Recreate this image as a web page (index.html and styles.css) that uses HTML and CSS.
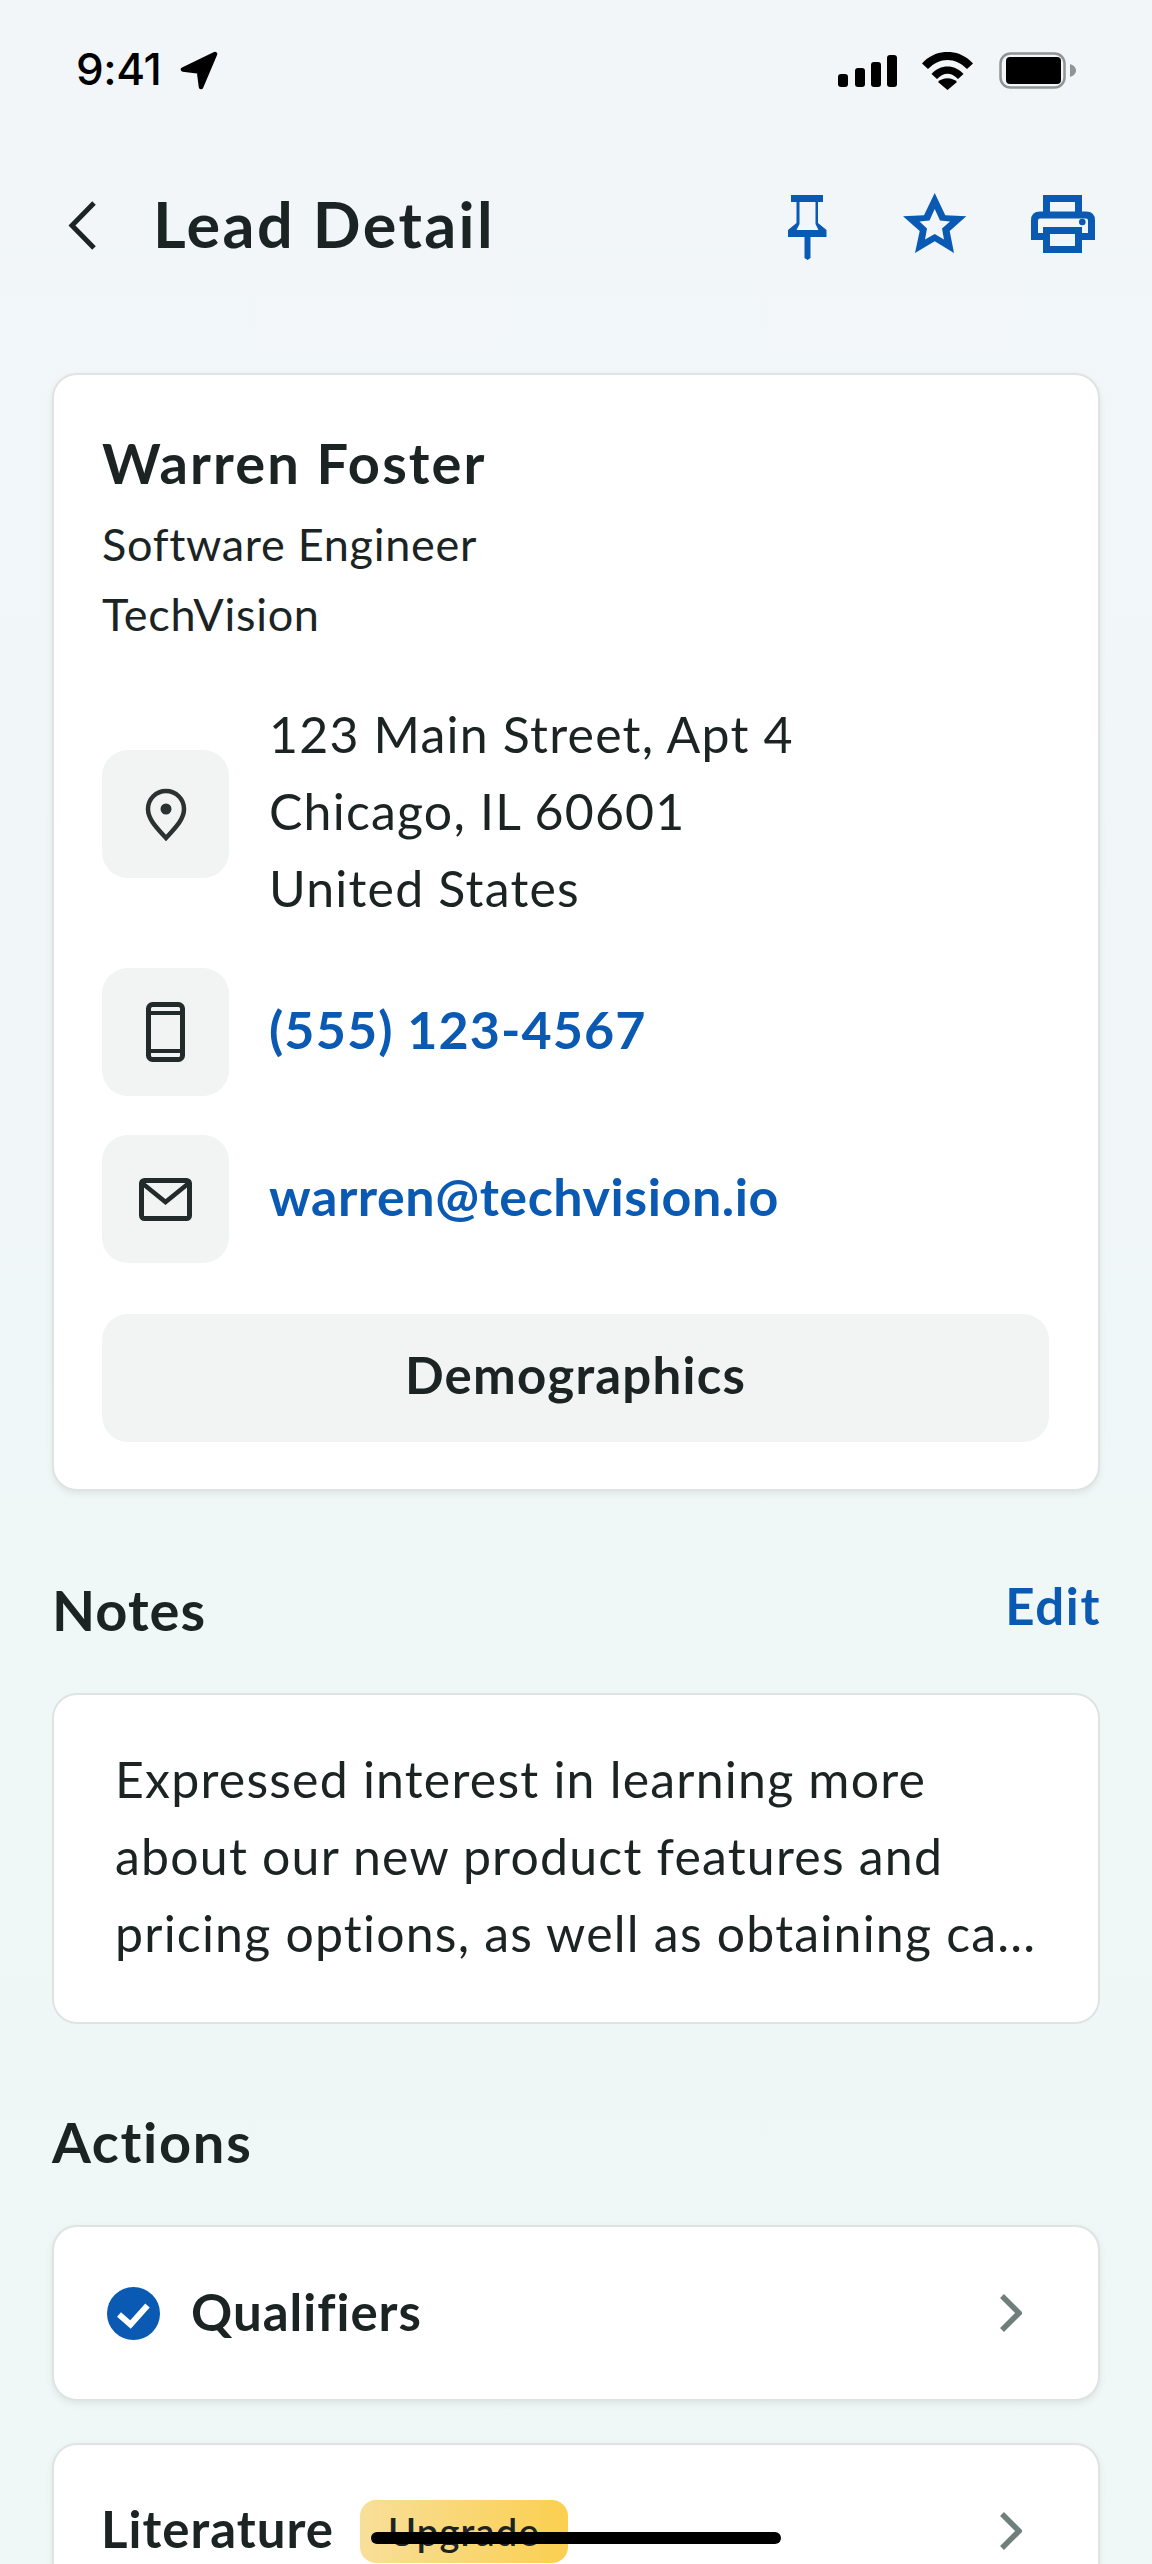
FILE: index.html
```html
<!DOCTYPE html>
<html lang="en">
<head>
<meta charset="utf-8">
<title>Lead Detail</title>
<link rel="stylesheet" href="styles.css">
</head>
<body>
<div class="screen">
  <div class="status">
    <div class="status-left">
      <span class="time">9:41</span>
      <svg class="arrow" viewBox="0 0 38 39"><path d="M35 3 3 18.500 19 20.500 21 36z" stroke="#000" stroke-width="4.500" stroke-linejoin="round"/></svg>
    </div>
    <div class="status-right">
      <svg class="signal" viewBox="0 0 59 32"><rect x="0" y="19" width="10" height="13" rx="3"/><rect x="17" y="13" width="10" height="19" rx="3"/><rect x="33" y="7" width="10" height="25" rx="3"/><rect x="49" y="0" width="10" height="32" rx="3"/></svg>
      <svg class="wifi" viewBox="0 0 51 38"><path d="M0 11.500C14-4 37-4 51 11.500L45 17C33 5 18 5 6 17z"/><path d="M9.500 22C18 12 33 12 41.500 22L36 27C29 20 22 20 15 27z"/><path d="M16 30C21 25 30 25 35 30L25.500 38z"/></svg>
      <svg class="battery" viewBox="0 0 77 37"><rect x="1.500" y="1.500" width="64" height="34" rx="10" fill="none" stroke="#8f9495" stroke-width="2.500"/><rect x="7" y="5" width="55" height="27" rx="4"/><path d="M71 12c3 1 6 3 6 6.500s-3 5.500-6 6.500z" fill="#8f9495"/></svg>
    </div>
  </div>

  <header class="header">
    <svg class="back" viewBox="0 0 29 51"><path d="M26 3 4 25.500 26 48" fill="none" stroke="#1b2423" stroke-width="5"/></svg>
    <h1 class="title">Lead Detail</h1>
    <div class="tools">
      <svg class="ico-pin" viewBox="0 0 39 65"><path fill-rule="evenodd" d="M3 0h32v7h-5v21l8.500 7v7H22.500v21l-3 2-3-2V42H0v-7l8.500-7V7H3zM11.500 7v22l-3 6h22l-3-6V7z"/></svg>
      <svg class="ico-star" viewBox="0 0 64 60"><path fill-rule="evenodd" d="M31.700 0 42.300 22.300 63.300 23.300 46.700 38 51 60 31.700 48.300 12 60 16.700 38 0 23.300 21 22.300zM31.700 16 26.500 27.500 16.500 28.500 24 35.500 22 46.500 31.700 41 41 46.500 39 35.500 47 28.500 37 27.500z"/></svg>
      <svg class="ico-print" viewBox="0 0 64 58"><path fill-rule="evenodd" d="M12 0h39v16.500h4q9 0 9 9V45H51v13H12V45H0V25.500q0-9 9-9h3zM19 7v9.500h25V7zM9 23.500q-2 0-2 2V38h5v-6h39v6h6V25.500q0-2-2-2zM19 39v12h25V39z"/><circle cx="51.300" cy="27" r="3.300"/></svg>
    </div>
  </header>

  <main class="main">
    <section class="card raised contact">
      <h2 class="name">Warren Foster</h2>
      <p class="sub">Software Engineer</p>
      <p class="sub">TechVision</p>

      <div class="row row-address">
        <div class="icon-box icon-box-address">
          <svg class="ico-loc" viewBox="0 0 42 53"><path d="M21 50C11 39 3 31 3 21a18 18 0 0 1 36 0c0 10-8 18-18 29z" fill="none" stroke="#2b3231" stroke-width="4.500"/><circle cx="21" cy="21" r="5.500" fill="#2b3231"/></svg>
        </div>
        <div class="address">123 Main Street, Apt 4<br>Chicago, IL 60601<br>United States</div>
      </div>

      <div class="row row-phone">
        <div class="icon-box">
          <svg class="ico-phone" viewBox="0 0 39 60"><rect x="2.500" y="2.500" width="34" height="55" rx="4" fill="none" stroke="#232b2a" stroke-width="5"/><path d="M2 11h35M2 49h35" stroke="#232b2a" stroke-width="4"/></svg>
        </div>
        <a class="link phone">(555) 123-4567</a>
      </div>

      <div class="row row-email">
        <div class="icon-box">
          <svg class="ico-mail" viewBox="0 0 53 43"><rect x="2.500" y="2.500" width="48" height="38" rx="3" fill="none" stroke="#232b2a" stroke-width="5"/><path d="M3 5l23.500 19L50 5" fill="none" stroke="#232b2a" stroke-width="4.500"/></svg>
        </div>
        <a class="link email">warren@techvision.io</a>
      </div>

      <button class="demo">Demographics</button>
    </section>

    <div class="section-head notes-head">
      <h2 class="section-title notes-title">Notes</h2>
      <a class="edit">Edit</a>
    </div>
    <section class="card notes">
      Expressed interest in learning more<br>about our new product features and<br>pricing options, as well as obtaining ca...
    </section>

    <h2 class="section-title actions-title">Actions</h2>
    <section class="card raised action qualifiers">
      <svg class="check" viewBox="0 0 53 53"><circle cx="26.500" cy="26.500" r="26.500" fill="#0a59b3"/><path d="M12 27.500l11.500 10L40.500 18.500" fill="none" stroke="#fff" stroke-width="6"/></svg>
      <span class="action-label">Qualifiers</span>
      <svg class="chev" viewBox="0 0 23 38"><path d="M3 2l17 17L3 36" fill="none" stroke="#6f7f7c" stroke-width="5.500"/></svg>
    </section>
    <section class="card raised action literature">
      <span class="action-label">Literature</span>
      <span class="badge">Upgrade</span>
      <svg class="chev" viewBox="0 0 23 38"><path d="M3 2l17 17L3 36" fill="none" stroke="#6f7f7c" stroke-width="5.500"/></svg>
    </section>
  </main>

  <div class="home-bar"></div>
</div>
</body>
</html>
```

FILE: styles.css
```css
* { box-sizing: border-box; margin: 0; padding: 0; }
html, body { width: 1152px; height: 2564px; overflow: hidden; }
body { font-family: "Lato", "Noto Sans", sans-serif; color: #1b2423; }
.screen { position: relative; width: 1152px; height: 2564px; overflow: hidden; background: linear-gradient(180deg, #f2f6f9 0%, #f0f7f7 60%, #eff8f6 100%); }

.status { display: flex; justify-content: space-between; align-items: center; height: 138px; padding: 0 76px 0 76px; }
.status-left, .status-right { display: flex; align-items: center; }
.status-right { margin-top: 3px; }
.time { font-family: "Inter", sans-serif; font-weight: 500; font-size: 44px; letter-spacing: -0.4px; color: #000; }
.arrow { width: 38px; height: 39px; margin-left: 19px; margin-top: 3px; fill: #000; }
.signal { width: 59px; height: 32px; fill: #000; }
.wifi { width: 51px; height: 38px; margin-left: 25px; fill: #000; }
.battery { width: 77px; height: 37px; margin-left: 26px; fill: #000; }

.header { display: flex; align-items: center; height: 174px; padding: 0 57px 0 68px; }
.back { width: 29px; height: 51px; }
.title { font-size: 63px; font-weight: 700; letter-spacing: 2.4px; line-height: 76px; margin-left: 56px; margin-bottom: 2px; flex: 1; }
.tools { display: flex; align-items: flex-start; height: 68px; fill: #0a59b3; }
.ico-pin { width: 39px; height: 65px; margin-top: 4px; }
.ico-star { width: 64px; height: 60px; margin-top: 2px; margin-left: 76px; }
.ico-print { width: 64px; height: 58px; margin-top: 4px; margin-left: 64px; }

.main { padding: 61px 52px 0; }
.card { background: #fff; border: 2px solid #dfe4e3; border-radius: 25px; }
.raised { box-shadow: 0 3px 6px rgba(60, 80, 80, 0.1); }

.contact { height: 1118px; padding: 55px 48px 0; }
.name { font-size: 56px; font-weight: 700; letter-spacing: 2.1px; line-height: 66px; }
.sub { font-size: 45px; letter-spacing: 0.7px; line-height: 70px; }
.sub:first-of-type { margin-top: 13px; }
.row { display: flex; align-items: center; }
.row-address { margin-top: 47px; }
.row-phone { margin-top: 41px; }
.row-email { margin-top: 39px; }
.icon-box { display: flex; align-items: center; justify-content: center; width: 127px; height: 128px; background: #f1f4f3; border-radius: 26px; margin-right: 40px; flex: none; }
.icon-box-address { margin-top: 5px; }
.ico-loc { width: 42px; height: 53px; }
.ico-phone { width: 39px; height: 60px; }
.ico-mail { width: 53px; height: 43px; }
.address { font-size: 50px; letter-spacing: 1.2px; line-height: 77px; }
.link { color: #0a59b3; font-size: 52px; font-weight: 700; padding-bottom: 7px; }
.phone { letter-spacing: 1.1px; }
.email { letter-spacing: 0.55px; }
.demo { display: block; width: 947px; height: 128px; margin-top: 51px; padding-bottom: 7px; border: 0; background: #f1f4f3; border-radius: 26px; font-family: inherit; font-size: 51px; font-weight: 700; letter-spacing: 1.2px; color: #1b2423; }

.section-head { display: flex; justify-content: space-between; align-items: flex-start; }
.notes-head { margin-top: 85px; }
.section-title { font-size: 56px; font-weight: 700; line-height: 68px; }
.notes-title { letter-spacing: 1px; }
.edit { color: #0a59b3; font-size: 51px; font-weight: 700; letter-spacing: 1.6px; margin-right: -1px; line-height: 60px; }
.notes { margin-top: 49px; height: 331px; padding: 46px 0 0 61px; font-size: 50px; letter-spacing: 1.2px; line-height: 77px; }
.actions-title { margin-top: 84px; letter-spacing: 1.7px; }
.action { display: flex; align-items: center; height: 176px; }
.qualifiers { margin-top: 49px; padding: 0 76px 0 53px; }
.check { width: 53px; height: 53px; margin-right: 31px; }
.action-label { font-size: 51px; font-weight: 700; letter-spacing: 1px; padding-bottom: 3px; }
.literature .action-label { padding-bottom: 5px; }
.chev { width: 23px; height: 38px; margin-left: auto; }
.literature { margin-top: 42px; padding: 0 76px 0 47px; }
.badge { margin-left: 26px; width: 208px; height: 63px; border-radius: 16px; background: linear-gradient(90deg, #f8df9a 0%, #fbcf4f 100%); font-size: 38px; font-weight: 600; letter-spacing: 1.2px; display: flex; align-items: center; justify-content: center; }

.home-bar { position: absolute; left: 371px; top: 2532px; width: 410px; height: 12px; background: #000; border-radius: 6px; }
```
